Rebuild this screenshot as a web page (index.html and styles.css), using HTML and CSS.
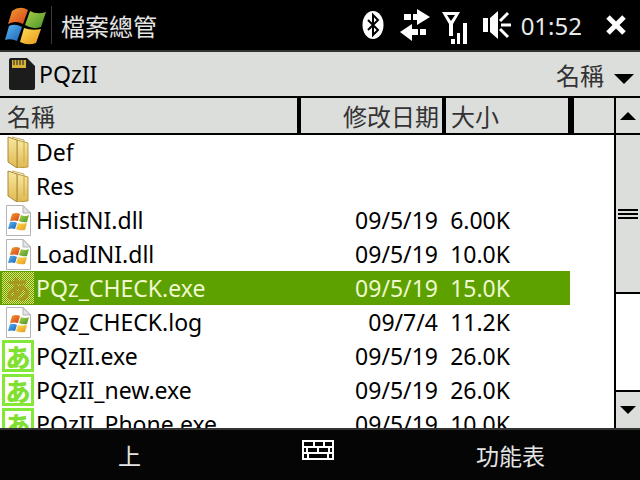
FILE: index.html
```html
<!DOCTYPE html>
<html lang="zh-Hant">
<head>
<meta charset="utf-8">
<title>檔案總管</title>
<link rel="stylesheet" href="styles.css">
</head>
<body>
<div class="screen">
  <header class="titlebar">
    <svg class="winlogo" width="48" height="46" viewBox="3 2 48 46">
      <path d="M12 11 Q20 5 28 10 L23 24 Q16 20 8 24Z" fill="url(#gOrange)"/>
      <path d="M30 11 Q37 15 46 12 L41 27 Q33 30 25 25Z" fill="url(#gGreen)"/>
      <path d="M9 26 Q15 23 22 27 L17 41 Q11 38 5 40Z" fill="url(#gBlue)"/>
      <path d="M24 28 Q32 31 41 29 L36 43 Q28 46 20 42Z" fill="url(#gYellow)"/>
    </svg>
    <div class="title-sep"></div>
    <span class="title">檔案總管</span>
    <div class="status">
      <svg class="st-bt" width="22" height="28" viewBox="0 0 22 28">
        <ellipse cx="11" cy="14" rx="10.5" ry="14" fill="#fff"/>
        <path d="M6 9 L16 19 L11 24 V4 L16 9 L6 19" fill="none" stroke="#000" stroke-width="2"/>
      </svg>
      <svg class="st-sync" width="30" height="32" viewBox="0 0 30 32">
        <path d="M4 5H17V0L30 8L17 16V11H4Z" fill="#fff"/>
        <path d="M0 23L12 15V20H26V26H12V32Z" fill="#fff"/>
        <rect x="11" y="5" width="2" height="6" fill="#000"/>
        <rect x="18" y="20" width="2" height="6" fill="#000"/>
      </svg>
      <svg class="st-sig" width="26" height="38" viewBox="0 0 26 38">
        <path d="M0 6H18L11 18V30H7V18Z M5 9H13L9 15Z" fill="#fff" fill-rule="evenodd"/>
        <rect x="9" y="33" width="4" height="5" fill="#fff"/>
        <rect x="15" y="27" width="3" height="11" fill="#fff"/>
        <rect x="21" y="17" width="4" height="21" fill="#fff"/>
      </svg>
      <svg class="st-vol" width="28" height="28" viewBox="0 0 28 28">
        <path d="M0 7h5v14H0z M7 7l8-7v28l-8-7z" fill="#fff"/>
        <path d="M18 14h10 M17 10l8-8 M17 18l8 8" stroke="#fff" stroke-width="3" fill="none"/>
      </svg>
      <span class="clock">01:52</span>
      <svg class="st-close" width="20" height="20" viewBox="0 0 20 20">
        <path d="M2 2 L18 18 M18 2 L2 18" stroke="#fff" stroke-width="5"/>
      </svg>
    </div>
  </header>

  <div class="toolbar">
    <svg class="card" width="26" height="32" viewBox="0 0 26 32">
      <path d="M2 0H18L26 8V30a2 2 0 0 1-2 2H2a2 2 0 0 1-2-2V2a2 2 0 0 1 2-2z" fill="#1c1c1c"/>
      <path d="M3 2h14v8H3z" fill="#d8b33a"/>
      <path d="M5 2v5M8 2v5M11 2v5M14 2v5" stroke="#1c1c1c" stroke-width="1"/>
    </svg>
    <span class="folder-name">PQzII</span>
    <span class="sort">名稱</span>
    <span class="tri-down tri-large"></span>
  </div>

  <div class="main">
    <div class="content">
      <div class="cols">
        <div class="col col-name">名稱</div>
        <div class="col col-date">修改日期</div>
        <div class="col col-size">大小</div>
        <div class="col col-rest"></div>
      </div>
      <ul class="files">
        <li class="row"><svg class="ic" viewBox="0 0 32 32"><use href="#folder"/></svg><span class="name">Def</span></li>
        <li class="row"><svg class="ic" viewBox="0 0 32 32"><use href="#folder"/></svg><span class="name">Res</span></li>
        <li class="row"><svg class="ic" viewBox="0 0 32 32"><use href="#doc"/></svg><span class="name">HistINI.dll</span><span class="date">09/5/19</span><span class="size">6.00K</span></li>
        <li class="row"><svg class="ic" viewBox="0 0 32 32"><use href="#doc"/></svg><span class="name">LoadINI.dll</span><span class="date">09/5/19</span><span class="size">10.0K</span></li>
        <li class="row selected"><span class="app app-sel">あ</span><span class="name">PQz_CHECK.exe</span><span class="date">09/5/19</span><span class="size">15.0K</span></li>
        <li class="row"><svg class="ic" viewBox="0 0 32 32"><use href="#doc"/></svg><span class="name">PQz_CHECK.log</span><span class="date">09/7/4</span><span class="size">11.2K</span></li>
        <li class="row"><span class="app">あ</span><span class="name">PQzII.exe</span><span class="date">09/5/19</span><span class="size">26.0K</span></li>
        <li class="row"><span class="app">あ</span><span class="name">PQzII_new.exe</span><span class="date">09/5/19</span><span class="size">26.0K</span></li>
        <li class="row"><span class="app">あ</span><span class="name">PQzII_Phone.exe</span><span class="date">09/5/19</span><span class="size">10.0K</span></li>
      </ul>
    </div>
    <div class="scrollbar">
      <div class="sb-btn sb-up"><span class="tri-up"></span></div>
      <div class="sb-thumb"><span class="grip"></span><span class="grip"></span><span class="grip"></span></div>
      <div class="sb-track"></div>
      <div class="sb-btn sb-down"><span class="tri-down"></span></div>
    </div>
  </div>

  <footer class="softbar">
    <span class="soft soft-left">上</span>
    <svg class="kbd" width="32" height="20" viewBox="0 0 32 20">
      <path d="M1 1h30v18H1z M1 7h30 M1 13h30 M12 1v6 M22 1v6 M5 7v6 M16 7v6 M27 7v6 M6 13v6 M26 13v6" fill="none" stroke="#fff" stroke-width="2"/>
    </svg>
    <span class="soft soft-right">功能表</span>
  </footer>
</div>
<svg class="defs" width="0" height="0">
  <defs>
    <linearGradient id="gOrange" x1="0" y1="0" x2="1" y2="1"><stop offset="0" stop-color="#f0a030"/><stop offset="1" stop-color="#d8401c"/></linearGradient>
    <linearGradient id="gGreen" x1="0" y1="0" x2="1" y2="1"><stop offset="0" stop-color="#a8d048"/><stop offset="1" stop-color="#4c9428"/></linearGradient>
    <linearGradient id="gBlue" x1="0" y1="0" x2="1" y2="1"><stop offset="0" stop-color="#5ab8f0"/><stop offset="1" stop-color="#1c62b8"/></linearGradient>
    <linearGradient id="gYellow" x1="0" y1="0" x2="1" y2="1"><stop offset="0" stop-color="#fcdc58"/><stop offset="1" stop-color="#e89818"/></linearGradient>
    <linearGradient id="gFolder" x1="0" y1="0" x2="0" y2="1"><stop offset="0" stop-color="#f8e8a0"/><stop offset="1" stop-color="#e0b850"/></linearGradient>
    <g id="folder">
      <path d="M16 4 L27 7 V31 L16 32Z" fill="url(#gFolder)" stroke="#b8983c"/>
      <path d="M7 1 L16 4 V32 L7 26Z" fill="url(#gFolder)" stroke="#a88a3c"/>
      <path d="M11 1 L23 4 V26" fill="none" stroke="#c8a848"/>
    </g>
    <g id="doc">
      <path d="M5.5 1.5H22L29.500 9V31.500H5.500Z" fill="#fff" stroke="#b4b4b4"/>
      <path d="M22 1.500V9H29.500Z" fill="#e4e4e4" stroke="#b4b4b4"/>
      <path d="M11 10 Q15 8 19 10 L17 17 Q13 16 9 17Z" fill="url(#gOrange)"/>
      <path d="M20 11 Q24 13 28 11 L26 18 Q22 19 18 17Z" fill="url(#gGreen)"/>
      <path d="M9 18 Q13 17 16 19 L14 25 Q11 24 7 25Z" fill="url(#gBlue)"/>
      <path d="M17 19 Q21 20 26 19 L24 26 Q19 27 15 25Z" fill="url(#gYellow)"/>
    </g>
  </defs>
</svg>
</body>
</html>
```
FILE: styles.css
```css
* { box-sizing: border-box; }
html, body { margin: 0; padding: 0; }
body { background: #000; font-family: "Noto Sans", "Noto Sans CJK TC", sans-serif; overflow: hidden; }
.screen { width: 640px; height: 480px; display: flex; flex-direction: column; overflow: hidden; }
.defs { display: block; height: 0; }

.titlebar { height: 52px; flex: none; background: #000; border-bottom: 2px solid #333; display: flex; align-items: center; color: #e8e8e8; padding-left: 3px; }
.winlogo { flex: none; }
.title-sep { width: 1px; height: 38px; background: #3a3a3a; }
.title { font-size: 24px; margin-left: 9px; color: #e4e4e4; }
.status { margin-left: auto; display: flex; align-items: center; }
.st-bt { margin-right: 16px; }
.st-sync { margin-right: 12px; }
.st-sig { margin-right: 15px; }
.st-vol { margin-right: 10px; }
.clock { font-size: 24px; color: #e8e8e8; margin-right: 24px; }
.st-close { margin-right: 14px; }

.toolbar { height: 46px; flex: none; background: #dcdedc; border-bottom: 2px solid #000; display: flex; align-items: center; padding: 0 6px 0 9px; }
.folder-name { font-size: 23px; color: #000; margin-left: 4px; }
.sort { font-size: 24px; color: #333; margin-left: auto; margin-right: 10px; }

.tri-down, .tri-up { display: block; width: 0; height: 0; border-left: 8px solid transparent; border-right: 8px solid transparent; }
.tri-down { border-top: 8px solid #000; }
.tri-up { border-bottom: 8px solid #000; }
.tri-large { border-left-width: 10px; border-right-width: 10px; border-top-width: 10px; margin-top: 9px; }

.main { flex: 1; min-height: 0; display: flex; background: #fff; overflow: hidden; }
.content { width: 614px; flex: none; display: flex; flex-direction: column; overflow: hidden; }
.cols { height: 37px; flex: none; display: flex; background: #dcdedc; border-bottom: 2px solid #000; font-size: 24px; color: #333; }
.col { height: 35px; line-height: 37px; white-space: nowrap; }
.col-name { width: 301px; border-right: 4px solid #000; padding-left: 7px; }
.col-date { width: 145px; border-right: 4px solid #000; text-align: right; padding-right: 3px; }
.col-size { width: 128px; border-right: 6px solid #000; padding-left: 5px; }
.col-rest { flex: 1; }

.files { list-style: none; margin: 0; padding: 0; }
.row { height: 34px; width: 570px; display: flex; align-items: center; font-size: 23px; line-height: 32px; color: #000; white-space: nowrap; }
.row.selected { background: #5ca100; color: #f0f8d0; }
.ic { width: 32px; height: 32px; flex: none; margin-left: 1px; }
.app { width: 32px; height: 32px; flex: none; margin-left: 2px; border: 3px solid #84e838; color: #7fe030; font-size: 25px; font-weight: 900; line-height: 26px; display: flex; align-items: center; justify-content: center; font-family: "Noto Sans CJK JP", sans-serif; }
.app-sel { border-color: transparent; color: #a89820; background: conic-gradient(#e8e070 25%, #5ca100 0 50%, #e8e070 0 75%, #5ca100 0) 0 0 / 2px 2px; }
.name { margin: 0 0 0 3px; width: 260px; }
.app + .name { margin-left: 2px; }
.date { width: 141px; text-align: right; margin-left: auto; }
.size { width: 72px; text-align: right; margin-right: 60px; }

.scrollbar { width: 26px; flex: none; border-left: 2px solid #000; display: flex; flex-direction: column; background: #fff; }
.sb-btn { background: #dcdedc; display: flex; align-items: center; justify-content: center; flex: none; }
.sb-up { height: 37px; border-bottom: 2px solid #000; }
.sb-down { height: 38px; border-top: 2px solid #000; }
.sb-thumb { height: 159px; background: #dcdedc; border-bottom: 2px solid #000; display: flex; flex-direction: column; align-items: center; justify-content: center; gap: 2px; flex: none; }
.grip { display: block; width: 20px; height: 2px; background: #000; }
.sb-track { flex: 1; }

.softbar { height: 52px; flex: none; background: #050505; border-top: 2px solid #333; display: flex; align-items: center; color: #e4e4e4; }
.soft { font-size: 23px; }
.soft-left { margin-left: 118px; }
.kbd { margin-left: 161px; margin-bottom: 10px; }
.soft-right { margin-left: 142px; }
```
